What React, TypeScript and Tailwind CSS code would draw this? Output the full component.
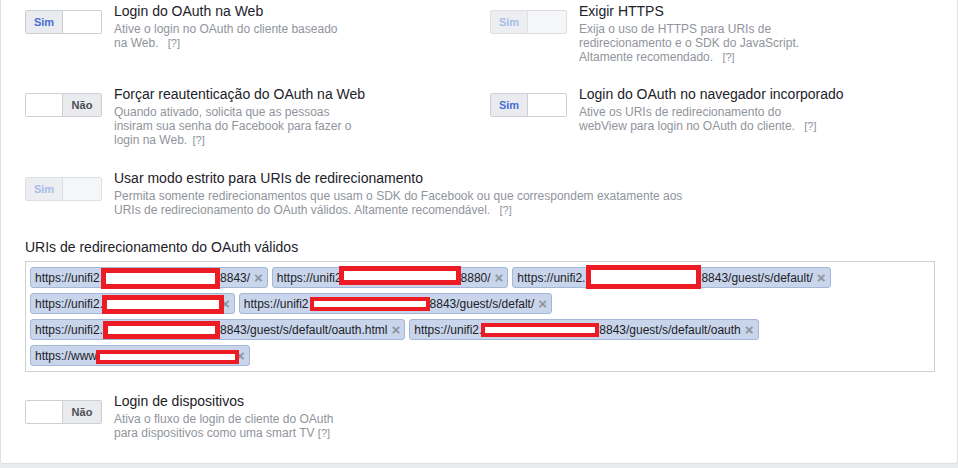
import React from 'react';

type ToggleState = 'sim' | 'nao' | 'sim-disabled';

function Toggle({ state }: { state: ToggleState }) {
  if (state === 'nao') {
    return (
      <div className="flex h-[24px] w-[77px] shrink-0 overflow-hidden rounded-[2px] border border-[#ccd0d5] bg-white">
        <div className="w-[37px] border-r border-[#ccd0d5] bg-white" />
        <div className="flex flex-1 items-center justify-center bg-[#e9ebee] text-[11px] font-bold text-[#4b4f56]">
          Não
        </div>
      </div>
    );
  }
  const disabled = state === 'sim-disabled';
  return (
    <div
      className={
        disabled
          ? 'flex h-[24px] w-[77px] shrink-0 overflow-hidden rounded-[2px] border border-[#dddfe2] bg-[#f5f6f7]'
          : 'flex h-[24px] w-[77px] shrink-0 overflow-hidden rounded-[2px] border border-[#ccd0d5] bg-white'
      }
    >
      <div
        className={
          disabled
            ? 'flex w-[37px] items-center justify-center border-r border-[#dddfe2] bg-[#eceef1] text-[11px] font-bold text-[#a9bbea]'
            : 'flex w-[37px] items-center justify-center border-r border-[#ccd0d5] bg-[#e9ebee] text-[11px] font-bold text-[#4a6fd8]'
        }
      >
        Sim
      </div>
      <div className="flex-1" />
    </div>
  );
}

function Help({ className = 'ml-[6px]' }: { className?: string }) {
  return <span className={'text-[11px] text-[#8d949e] ' + className}>[?]</span>;
}

function Setting({
  toggle,
  title,
  children,
  descClass = 'w-[239px]',
}: {
  toggle: ToggleState;
  title: string;
  children: React.ReactNode;
  descClass?: string;
}) {
  return (
    <div className="flex items-start">
      <div className="mt-[8px]">
        <Toggle state={toggle} />
      </div>
      <div className="ml-[12px]">
        <div className="text-[14px] leading-[18px] text-[#1d2129]">{title}</div>
        <div className={'mt-[2px] text-[12px] leading-[14px] text-[#90949c] ' + descClass}>{children}</div>
      </div>
    </div>
  );
}

type Tag = {
  pre: string;
  box: string;
  post?: string;
  xClass?: string;
};

// the red boxes are the redactions painted over the screenshot
const tags: Tag[] = [
  { pre: 'https://unifi2.', box: 'w-[119px] h-[21px] -ml-[2px] translate-y-[1px] border-[5px]', post: '8843/' },
  { pre: 'https://unifi2', box: 'w-[122px] h-[19px] -ml-[3px] -translate-y-[2px] border-[5px]', post: '8880/' },
  { pre: 'https://unifi2.', box: 'w-[115px] h-[24px] ml-[1px] -translate-y-[1px] border-[5px]', post: '8843/guest/s/default/' },
  { pre: 'https://unifi2.', box: 'w-[122px] h-[19px] -ml-[1px] translate-y-[1px] border-[5px]', xClass: '-ml-[3px]' },
  { pre: 'https://unifi2', box: 'w-[120px] h-[14px] ml-[1px] translate-y-[0px] border-[4px]', post: '8843/guest/s/defalt/' },
  { pre: 'https://unifi2.', box: 'w-[117px] h-[18px] ml-[0px] translate-y-[0px] border-[5px]', post: '8843/guest/s/default/oauth.html' },
  { pre: 'https://unifi2.', box: 'w-[118px] h-[14px] -ml-[1px] translate-y-[0px] border-[4px]', post: '8843/guest/s/default/oauth' },
  { pre: 'https://www', box: 'w-[143px] h-[14px] -ml-[1px] translate-y-[1px] border-[4px]', xClass: '-ml-[3px]' },
];

function UriTag({ tag }: { tag: Tag }) {
  return (
    <div className="flex h-[21px] items-center whitespace-nowrap rounded-[3px] border border-[#a4b7d8] bg-[#c8d5ea] pl-[4px] pr-[4px] text-[12px] text-[#1d2129]">
      <span>{tag.pre}</span>
      <span className={'relative z-10 box-border inline-block shrink-0 border-[#ed1c24] bg-white ' + tag.box} />
      {tag.post && <span>{tag.post}</span>}
      <span className={'text-[15px] font-bold leading-none text-[#8d949e] ' + (tag.xClass ?? 'ml-[4px]')}>×</span>
    </div>
  );
}

export default function App() {
  return (
    <div className="h-[468px] w-[958px] overflow-hidden bg-[#e9ebee] font-['Liberation_Sans',Arial,sans-serif]">
      <div className="box-border h-[464px] rounded-b-[3px] border-x border-b border-[#dddfe2] bg-white pl-[24px] pr-[22px] pt-[2px]">
        <div className="grid grid-cols-[465px_1fr] gap-y-[21px]">
          <Setting toggle="sim" title="Login do OAuth na Web">
            Ative o login no OAuth do cliente baseado na Web. <Help />
          </Setting>
          <Setting toggle="sim-disabled" title="Exigir HTTPS">
            Exija o uso de HTTPS para URIs de redirecionamento e o SDK do JavaScript. Altamente recomendado. <Help />
          </Setting>
          <Setting toggle="nao" title="Forçar reautenticação do OAuth na Web">
            Quando ativado, solicita que as pessoas insiram sua senha do Facebook para fazer o login na Web.{' '}
            <Help className="ml-[2px]" />
          </Setting>
          <Setting toggle="sim" title="Login do OAuth no navegador incorporado">
            Ative os URIs de redirecionamento do webView para login no OAuth do cliente. <Help />
          </Setting>
        </div>

        <div className="mt-[22px]">
          <Setting toggle="sim-disabled" title="Usar modo estrito para URIs de redirecionamento" descClass="w-[580px]">
            Permita somente redirecionamentos que usam o SDK do Facebook ou que correspondem exatamente aos URIs de
            redirecionamento do OAuth válidos. Altamente recomendável. <Help />
          </Setting>
        </div>

        <div className="mt-[21px] text-[14px] leading-[18px] text-[#1d2129]">URIs de redirecionamento do OAuth válidos</div>
        <div className="mt-[5px] box-border flex min-h-[111px] w-[910px] flex-wrap content-start gap-x-[4px] gap-y-[5px] border border-[#ccd0d5] bg-white pb-[4px] pl-[4px] pr-[30px] pt-[5px]">
          {tags.map((t, i) => (
            <UriTag key={i} tag={t} />
          ))}
        </div>

        <div className="mt-[20px]">
          <Setting toggle="nao" title="Login de dispositivos">
            Ativa o fluxo de login de cliente do OAuth para dispositivos como uma smart TV <Help className="ml-0" />
          </Setting>
        </div>
      </div>
    </div>
  );
}
